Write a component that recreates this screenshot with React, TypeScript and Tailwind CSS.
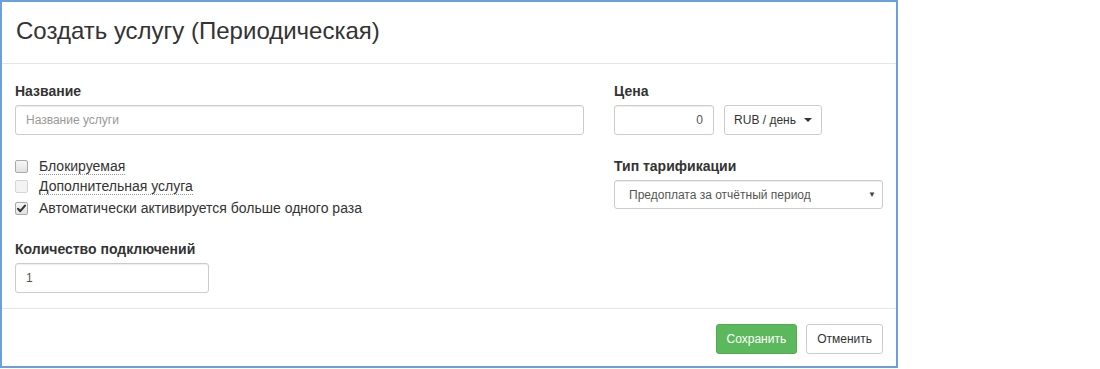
import React from "react";

const font = { fontFamily: '"Liberation Sans", Arial, sans-serif' };

function Checkbox({ checked, disabled }: { checked?: boolean; disabled?: boolean }) {
  return (
    <span
      className={
        "relative inline-block w-[13px] h-[13px] rounded-[2px] border shrink-0 " +
        (disabled
          ? "border-[#d6d6d6] bg-[#f3f3f3]"
          : "border-[#a9a9a9] bg-gradient-to-b from-[#f6f6f6] to-[#e2e2e2]")
      }
    >
      {checked && (
        <svg viewBox="0 0 13 13" className="absolute left-[-1px] top-[-1px] w-[13px] h-[13px]">
          <path d="M3 6.8 L5.3 9.2 L10 3.6" fill="none" stroke="#333" strokeWidth="2" strokeLinecap="round" strokeLinejoin="round" />
        </svg>
      )}
    </span>
  );
}

export default function App() {
  return (
    <div className="w-[1100px] h-[369px] bg-white" style={font}>
      <div className="w-[898px] h-[368px] border-2 border-[#6ca0dc] bg-white flex flex-col text-[#333]">
        <div className="h-[62px] shrink-0 border-b border-[#e5e5e5] flex items-center pb-[3px] px-[14px]">
          <h4 className="text-[24px] leading-[26px] text-[#333] font-normal">Создать услугу (Периодическая)</h4>
        </div>
        <div className="flex-1 flex gap-[30px] px-[13px] pt-[17px] pb-[15px] border-b border-[#e5e5e5]">
          <div className="w-[569px] flex flex-col">
            <label className="text-[14px] leading-[20px] font-bold mb-[4px]">Название</label>
            <input
              placeholder="Название услуги"
              className="w-full h-[30px] border border-[#ccc] rounded-[3px] px-[10px] text-[12px] text-[#555] placeholder:text-[#999] shadow-[inset_0_1px_1px_rgba(0,0,0,0.075)] outline-none"
              style={font}
            />
            <div className="mt-[21px] flex flex-col text-[14px] leading-[20px]">
              <div className="h-[20px] flex items-center">
                <Checkbox />
                <span className="ml-[11px] leading-[16px] border-b border-dotted border-[#999]">Блокируемая</span>
              </div>
              <div className="h-[20px] flex items-center">
                <Checkbox disabled />
                <span className="ml-[11px] leading-[16px] border-b border-dotted border-[#999]">Дополнительная услуга</span>
              </div>
              <div className="h-[20px] mt-[2px] flex items-center">
                <Checkbox checked />
                <span className="ml-[11px]">Автоматически активируется больше одного раза</span>
              </div>
            </div>
            <label className="mt-[21px] text-[14px] leading-[20px] font-bold mb-[4px]">Количество подключений</label>
            <input
              defaultValue="1"
              className="w-[194px] h-[30px] border border-[#ccc] rounded-[3px] px-[10px] text-[12px] text-[#555] shadow-[inset_0_1px_1px_rgba(0,0,0,0.075)] outline-none"
              style={font}
            />
          </div>
          <div className="w-[269px] flex flex-col">
            <label className="text-[14px] leading-[20px] font-bold mb-[4px]">Цена</label>
            <div className="flex gap-[10px]">
              <input
                defaultValue="0"
                className="w-[100px] h-[30px] border border-[#ccc] rounded-[3px] px-[10px] text-right text-[12px] text-[#555] shadow-[inset_0_1px_1px_rgba(0,0,0,0.075)] outline-none"
                style={font}
              />
              <button className="w-[98px] h-[30px] border border-[#ccc] rounded-[3px] bg-white text-[12px] text-[#333] flex items-center justify-center gap-[8px]" style={font}>
                <span>RUB / день</span>
                <span className="w-0 h-0 border-l-[4px] border-r-[4px] border-t-[4px] border-l-transparent border-r-transparent border-t-[#333]" />
              </button>
            </div>
            <label className="mt-[21px] text-[14px] leading-[20px] font-bold mb-[4px]">Тип тарификации</label>
            <div className="h-[29px] border border-[#ccc] rounded-[3px] flex items-center justify-between pl-[14px] pr-[6px] text-[12px] text-[#555] shadow-[inset_0_1px_1px_rgba(0,0,0,0.075)]">
              <span>Предоплата за отчётный период</span>
              <span className="text-[8px] text-[#444]">▼</span>
            </div>
          </div>
        </div>
        <div className="h-[57px] shrink-0 flex justify-end items-start gap-[9px] pt-[15px] px-[13px]">
          <button className="h-[30px] px-[10px] rounded-[3px] bg-[#5cb85c] border border-[#4cae4c] text-white text-[12px]" style={font}>
            Сохранить
          </button>
          <button className="h-[30px] px-[10px] rounded-[3px] bg-white border border-[#ccc] text-[#333] text-[12px]" style={font}>
            Отменить
          </button>
        </div>
      </div>
    </div>
  );
}
